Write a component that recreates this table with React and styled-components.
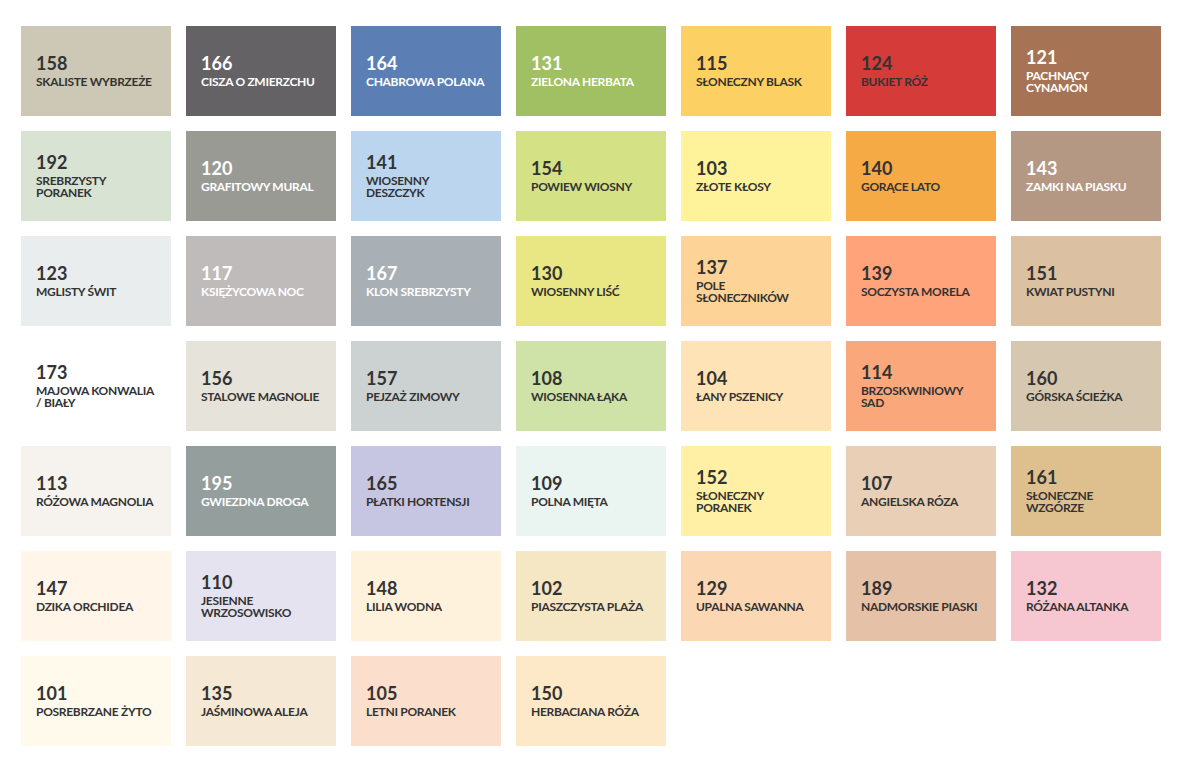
import React from "react";
import styled, { createGlobalStyle } from "styled-components";

const GlobalStyle = createGlobalStyle`
  body {
    margin: 0;
    background: #ffffff;
    font-family: Lato, "Open Sans", sans-serif;
  }
`;

// kolory palety, rząd po rzędzie
const colors = [
  { code: "158", name: "SKALISTE WYBRZEŻE", bg: "#ccc8b5" },
  { code: "166", name: "CISZA O ZMIERZCHU", bg: "#646265", light: true },
  { code: "164", name: "CHABROWA POLANA", bg: "#5b7fb4", light: true },
  { code: "131", name: "ZIELONA HERBATA", bg: "#a1bf63", light: true },
  { code: "115", name: "SŁONECZNY BLASK", bg: "#fdd063" },
  { code: "124", name: "BUKIET RÓŻ", bg: "#d53b39" },
  { code: "121", name: "PACHNĄCY\nCYNAMON", bg: "#a67454", light: true },

  { code: "192", name: "SREBRZYSTY\nPORANEK", bg: "#d9e3d3" },
  { code: "120", name: "GRAFITOWY MURAL", bg: "#9a9a95", light: true },
  { code: "141", name: "WIOSENNY\nDESZCZYK", bg: "#bbd5ef" },
  { code: "154", name: "POWIEW WIOSNY", bg: "#d5e185" },
  { code: "103", name: "ZŁOTE KŁOSY", bg: "#fef29a" },
  { code: "140", name: "GORĄCE LATO", bg: "#f5aa45" },
  { code: "143", name: "ZAMKI NA PIASKU", bg: "#b59883", light: true },

  { code: "123", name: "MGLISTY ŚWIT", bg: "#e9edee" },
  { code: "117", name: "KSIĘŻYCOWA NOC", bg: "#bfbbbb", light: true },
  { code: "167", name: "KLON SREBRZYSTY", bg: "#a8b0b5", light: true },
  { code: "130", name: "WIOSENNY LIŚĆ", bg: "#e8e783" },
  { code: "137", name: "POLE\nSŁONECZNIKÓW", bg: "#fdd397" },
  { code: "139", name: "SOCZYSTA MORELA", bg: "#ffa47a" },
  { code: "151", name: "KWIAT PUSTYNI", bg: "#dbc0a1" },

  { code: "173", name: "MAJOWA KONWALIA\n/ BIAŁY", bg: "#ffffff" },
  { code: "156", name: "STALOWE MAGNOLIE", bg: "#e6e3da" },
  { code: "157", name: "PEJZAŻ ZIMOWY", bg: "#ccd2d1" },
  { code: "108", name: "WIOSENNA ŁĄKA", bg: "#cfe2a8" },
  { code: "104", name: "ŁANY PSZENICY", bg: "#fde3b6" },
  { code: "114", name: "BRZOSKWINIOWY\nSAD", bg: "#f9a77b" },
  { code: "160", name: "GÓRSKA ŚCIEŻKA", bg: "#d6c8b0" },

  { code: "113", name: "RÓŻOWA MAGNOLIA", bg: "#f6f3ee" },
  { code: "195", name: "GWIEZDNA DROGA", bg: "#939e9d", light: true },
  { code: "165", name: "PŁATKI HORTENSJI", bg: "#c7c6e2" },
  { code: "109", name: "POLNA MIĘTA", bg: "#eaf4f0" },
  { code: "152", name: "SŁONECZNY\nPORANEK", bg: "#fff0a6" },
  { code: "107", name: "ANGIELSKA RÓZA", bg: "#e8cfb5" },
  { code: "161", name: "SŁONECZNE\nWZGÓRZE", bg: "#dec08e" },

  { code: "147", name: "DZIKA ORCHIDEA", bg: "#fff6e9" },
  { code: "110", name: "JESIENNE\nWRZOSOWISKO", bg: "#e4e3ef" },
  { code: "148", name: "LILIA WODNA", bg: "#fff2dc" },
  { code: "102", name: "PIASZCZYSTA PLAŻA", bg: "#f5e6c4" },
  { code: "129", name: "UPALNA SAWANNA", bg: "#fbd8b3" },
  { code: "189", name: "NADMORSKIE PIASKI", bg: "#e5c2a7" },
  { code: "132", name: "RÓŻANA ALTANKA", bg: "#f6c6d1" },

  { code: "101", name: "POSREBRZANE ŻYTO", bg: "#fffaeb" },
  { code: "135", name: "JAŚMINOWA ALEJA", bg: "#f5e8d4" },
  { code: "105", name: "LETNI PORANEK", bg: "#fbdfcc" },
  { code: "150", name: "HERBACIANA RÓŻA", bg: "#fde8c8" },
];

const Palette = styled.div`
  display: grid;
  grid-template-columns: repeat(7, 150px);
  grid-auto-rows: 90px;
  gap: 15px;
  padding: 26px 21px;
`;

const Swatch = styled.div`
  display: flex;
  flex-direction: column;
  justify-content: center;
  padding: 0 15px;
  background: ${(p) => p.$bg};
  color: ${(p) => (p.$light ? "#ffffff" : "#333333")};
`;

const Code = styled.div`
  font-size: 18px;
  font-weight: 700;
  line-height: 19px;
`;

const Name = styled.div`
  margin-top: 3px;
  font-size: 12px;
  font-weight: 700;
  line-height: 12px;
  white-space: pre-line;
  letter-spacing: -0.3px;
`;

const App = () => {
  return (
    <>
      <GlobalStyle />
      <Palette>
        {colors.map((c) => (
          <Swatch key={c.code} $bg={c.bg} $light={c.light}>
            <Code>{c.code}</Code>
            <Name>{c.name}</Name>
          </Swatch>
        ))}
      </Palette>
    </>
  );
};

export default App;
